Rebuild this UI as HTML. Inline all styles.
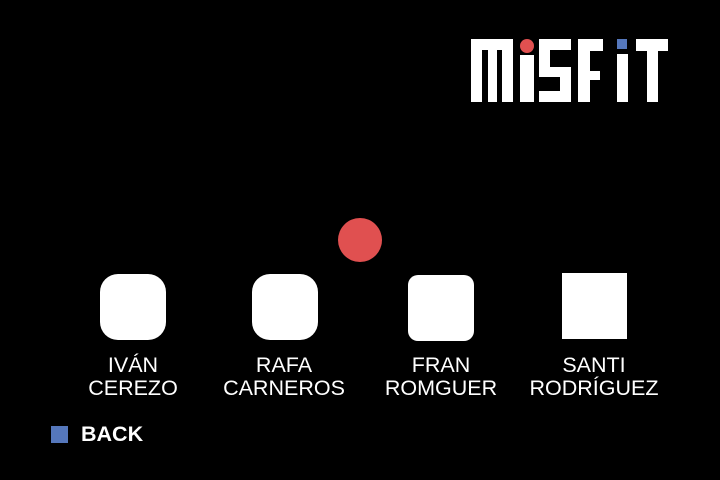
<!DOCTYPE html>
<html><head><meta charset="utf-8"><style>
html,body{margin:0;padding:0;background:#000;width:720px;height:480px;overflow:hidden;position:relative;font-family:"Liberation Sans",sans-serif;color:#fff}
.l{position:absolute;width:180px;text-align:center;font-size:21.5px;line-height:23px;top:354px}
</style></head><body>
<svg width="720" height="480" style="position:absolute;left:0;top:0">
<g fill="#fff">
<rect x="471" y="39" width="42" height="11"/>
<rect x="471" y="39" width="11" height="63"/>
<rect x="488" y="39" width="9" height="63"/>
<rect x="502" y="39" width="11" height="63"/>
<rect x="520" y="55" width="14" height="47"/>
<rect x="539" y="39" width="32" height="11"/>
<rect x="539" y="39" width="11" height="38"/>
<rect x="539" y="67" width="32" height="10"/>
<rect x="560" y="67" width="11" height="35"/>
<rect x="539" y="91" width="32" height="11"/>
<rect x="578" y="39" width="12" height="63"/>
<rect x="578" y="39" width="25" height="12"/>
<rect x="578" y="71" width="22" height="9"/>
<rect x="617" y="54" width="11" height="48"/>
<rect x="636" y="39" width="32" height="12"/>
<rect x="647" y="39" width="11" height="63"/>
</g>
<circle cx="527" cy="46" r="7" fill="#e05050"/>
<rect x="617" y="39" width="10" height="10" fill="#5577bb"/>
<circle cx="360" cy="240" r="22" fill="#e05050"/>
<rect x="100" y="274" width="66" height="66" rx="18" fill="#fff"/>
<rect x="252" y="274" width="66" height="66" rx="18" fill="#fff"/>
<rect x="408" y="275" width="66" height="66" rx="10" fill="#fff"/>
<rect x="562" y="273" width="65" height="66" fill="#fff"/>
<rect x="51" y="426" width="17" height="17" fill="#5577bb"/>
</svg>
<div class="l" style="left:43px">IVÁN<br>CEREZO</div>
<div class="l" style="left:194px">RAFA<br>CARNEROS</div>
<div class="l" style="left:351px">FRAN<br>ROMGUER</div>
<div class="l" style="left:504px">SANTI<br>RODRÍGUEZ</div>
<div style="position:absolute;left:81px;top:422px;font-size:21.5px;font-weight:bold;line-height:24px">BACK</div>
</body></html>
